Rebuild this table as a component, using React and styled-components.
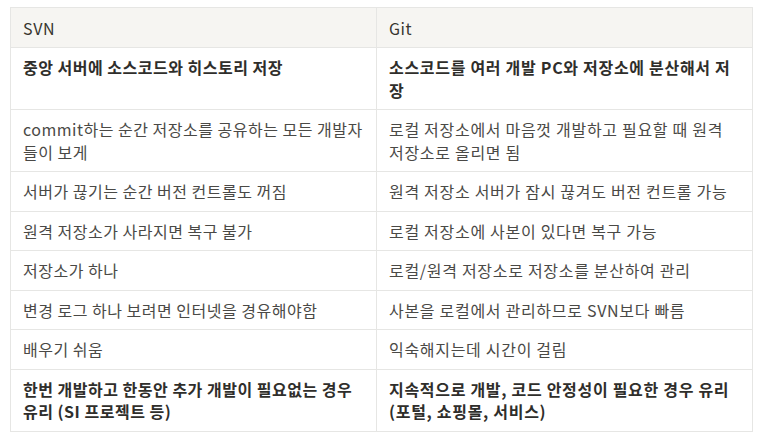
import styled, { createGlobalStyle } from "styled-components";

const GlobalStyle = createGlobalStyle`
  html, body {
    margin: 0;
    padding: 0;
    background: #ffffff;
  }
  body {
    font-family: "Noto Sans CJK KR", "Noto Sans", sans-serif;
  }
`;

const rows = [
  {
    bold: true,
    svn: "중앙 서버에 소스코드와 히스토리 저장",
    git: "소스코드를 여러 개발 PC와 저장소에 분산해서 저장",
  },
  {
    svn: "commit하는 순간 저장소를 공유하는 모든 개발자들이 보게",
    git: "로컬 저장소에서 마음껏 개발하고 필요할 때 원격 저장소로 올리면 됨",
  },
  { svn: "서버가 끊기는 순간 버전 컨트롤도 꺼짐", git: "원격 저장소 서버가 잠시 끊겨도 버전 컨트롤 가능" },
  { svn: "원격 저장소가 사라지면 복구 불가", git: "로컬 저장소에 사본이 있다면 복구 가능" },
  { svn: "저장소가 하나", git: "로컬/원격 저장소로 저장소를 분산하여 관리" },
  { svn: "변경 로그 하나 보려면 인터넷을 경유해야함", git: "사본을 로컬에서 관리하므로 SVN보다 빠름" },
  { svn: "배우기 쉬움", git: "익숙해지는데 시간이 걸림" },
  {
    bold: true,
    svn: "한번 개발하고 한동안 추가 개발이 필요없는 경우 유리 (SI 프로젝트 등)",
    git: "지속적으로 개발, 코드 안정성이 필요한 경우 유리 (포털, 쇼핑몰, 서비스)",
  },
];

const Page = styled.div`
  padding: 7px 10px 0 10px;
`;

const Table = styled.table`
  width: 742px;
  border-collapse: collapse;
  table-layout: fixed;
  font-size: 16px;
  line-height: 22.5px;
  color: #3b3a37;
`;

const HeadCell = styled.th`
  background: #f6f5f2;
  border: 1px solid #e6e6e4;
  padding: 8.5px 12px 8px 12px;
  text-align: left;
  font-weight: 400;
  letter-spacing: 0.6px;
  color: #37352f;
  vertical-align: top;
  height: 39px;
  box-sizing: border-box;
`;

const Cell = styled.td`
  border: 1px solid #e6e6e4;
  padding: 8px 12px;
  vertical-align: top;
  letter-spacing: ${(p) => (p.$wide ? "0.7px" : "0.5px")};
  font-weight: ${(p) => (p.$bold ? 700 : 400)};
  color: ${(p) => (p.$bold ? "#2f2e2b" : "#4a4946")};
  word-break: break-all;
`;

const Row = styled.tr`
  height: ${(p) => (p.$tall ? "62px" : "39.5px")};
`;

export default function App() {
  return (
    <Page>
      <GlobalStyle />
      <Table>
        <colgroup>
          <col style={{ width: "366px" }} />
          <col style={{ width: "376px" }} />
        </colgroup>
        <thead>
          <tr>
            <HeadCell>SVN</HeadCell>
            <HeadCell>Git</HeadCell>
          </tr>
        </thead>
        <tbody>
          {rows.map((r, i) => (
            <Row key={i} $tall={r.bold || i === 1}>
              <Cell $bold={r.bold}>{r.svn}</Cell>
              <Cell $bold={r.bold} $wide>{r.git}</Cell>
            </Row>
          ))}
        </tbody>
      </Table>
    </Page>
  );
}
